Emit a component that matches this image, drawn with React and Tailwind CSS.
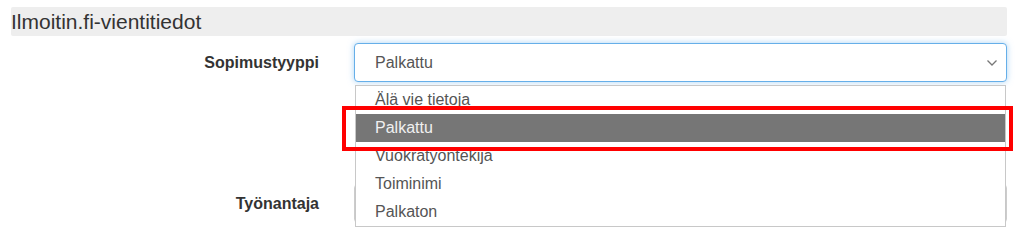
import React from 'react';

const options = ['Älä vie tietoja', 'Palkattu', 'Vuokratyöntekijä', 'Toiminimi', 'Palkaton'];

function Chevron() {
  return (
    <svg width="12" height="8" viewBox="0 0 12 8" className="text-[#777]">
      <path d="M1.5 1.5 L6 6 L10.5 1.5" fill="none" stroke="currentColor" strokeWidth="1.3" />
    </svg>
  );
}

export default function App() {
  const selected = 'Palkattu';

  return (
    <div className="relative w-[1024px] h-[231px] overflow-hidden bg-white font-['Liberation_Sans',Arial,sans-serif] text-[#333]">
      <div className="pl-[11px] pt-[7px] w-[1007px]">
        {/* section header */}
        <div className="h-[29px] bg-[#eeeeee] rounded-[2px] text-[21px] leading-[29px]">
          Ilmoitin.fi-vientitiedot
        </div>

        {/* Sopimustyyppi row */}
        <div className="flex items-center mt-[7px]">
          <label className="w-[308px] text-right font-bold text-[16px]">Sopimustyyppi</label>
          <div className="relative ml-[35px] flex-1">
            <div className="h-[39px] flex items-center justify-between pl-[20px] pr-[8px] border border-[#66afe9] rounded-[4px] bg-white shadow-[0_0_6px_rgba(102,175,233,0.55)] text-[16px] text-[#555]">
              <span>{selected}</span>
              <Chevron />
            </div>

            {/* open option list */}
            <ul className="absolute z-10 left-[1px] right-[1px] top-[42px] border border-[#c8c8c8] bg-white text-[16px] text-[#555]">
              {options.map((o) => (
                <li
                  key={o}
                  className={`h-[28px] leading-[28px] pl-[19px] ${o === selected ? 'bg-[#767676] text-[#f0f0f0]' : ''}`}
                >
                  {o}
                </li>
              ))}
            </ul>
          </div>
        </div>

        {/* Työnantaja row */}
        <div className="flex items-center mt-[102px]">
          <label className="w-[308px] text-right font-bold text-[16px]">Työnantaja</label>
          <div className="ml-[35px] flex-1 h-[39px] border border-[#ccc] rounded-[4px]"></div>
        </div>
      </div>

      {/* highlight annotation */}
      <div className="absolute z-20 left-[342px] top-[106px] w-[671px] h-[45px] border-[4px] border-[#ff0000]"></div>
    </div>
  );
}
